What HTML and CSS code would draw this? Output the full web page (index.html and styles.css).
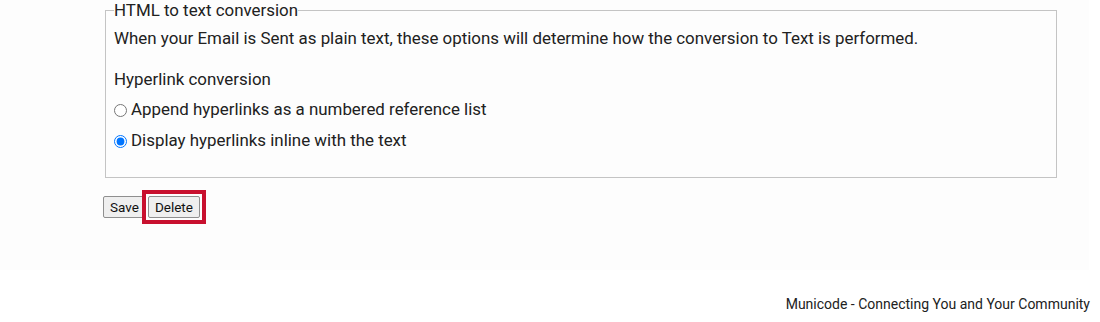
FILE: index.html
```html
<!DOCTYPE html>
<html>
<head>
<meta charset="utf-8">
<link rel="stylesheet" href="styles.css">
</head>
<body>
<div class="main">
  <fieldset class="box">
    <legend class="box-title">HTML to text conversion</legend>
    <p class="desc">When your Email is Sent as plain text, these options will determine how the conversion to Text is performed.</p>
    <div class="group-label">Hyperlink conversion</div>
    <label class="opt opt-first"><input type="radio" name="hl" class="radio"><span>Append hyperlinks as a numbered reference list</span></label>
    <label class="opt"><input type="radio" name="hl" class="radio" checked><span>Display hyperlinks inline with the text</span></label>
  </fieldset>
  <div class="actions">
    <button class="btn">Save</button>
    <span class="highlight"><button class="btn">Delete</button></span>
  </div>
</div>
<div class="footer">Municode - Connecting You and Your Community</div>
</body>
</html>
```

FILE: styles.css
```css
html, body {
  margin: 0;
  padding: 0;
  background: #ffffff;
}
body {
  font-family: Roboto, "Liberation Sans", sans-serif;
  color: #212121;
  width: 1100px;
  height: 322px;
  overflow: hidden;
}
.main {
  width: 1089px;
  height: 270px;
  box-sizing: border-box;
  background: #fdfdfd;
  padding: 1px 32px 0 105px;
}
.box {
  margin: 0;
  border: 1px solid #c4c4c4;
  padding: 0 8px 27px 8px;
  min-width: 0;
}
.box-title {
  padding: 0;
  font-size: 16.9px;
  line-height: 19px;
}
.desc {
  margin: 9px 0 0;
  font-size: 16.9px;
  line-height: 19px;
}
.group-label {
  margin-top: 22px;
  font-size: 16.9px;
  line-height: 19px;
}
.opt {
  display: flex;
  align-items: center;
  margin-top: 12px;
  font-size: 16.9px;
  line-height: 19px;
}
.opt-first {
  margin-top: 11px;
}
.radio {
  width: 13px;
  height: 13px;
  margin: 1px 4px 0 0;
}
.actions {
  display: flex;
  align-items: flex-start;
  gap: 2px;
  margin: 18px 0 0 -2px;
}
.btn {
  font-family: Roboto, "Liberation Sans", sans-serif;
  font-size: 13.5px;
  line-height: 16px;
  color: #111;
  background: #efefef;
  border: 1px solid #8f8f8f;
  border-radius: 2px;
  padding: 2px 6px;
  height: 22px;
  margin: 0;
}
.highlight {
  display: flex;
  position: relative;
}
.highlight::after {
  content: "";
  position: absolute;
  top: -6px;
  left: -6px;
  right: -6px;
  bottom: -6px;
  border: 4px solid #c8102e;
  pointer-events: none;
}
.footer {
  text-align: right;
  padding: 26px 10px 0 0;
  font-size: 14px;
  line-height: 16px;
  color: #212121;
}
```
